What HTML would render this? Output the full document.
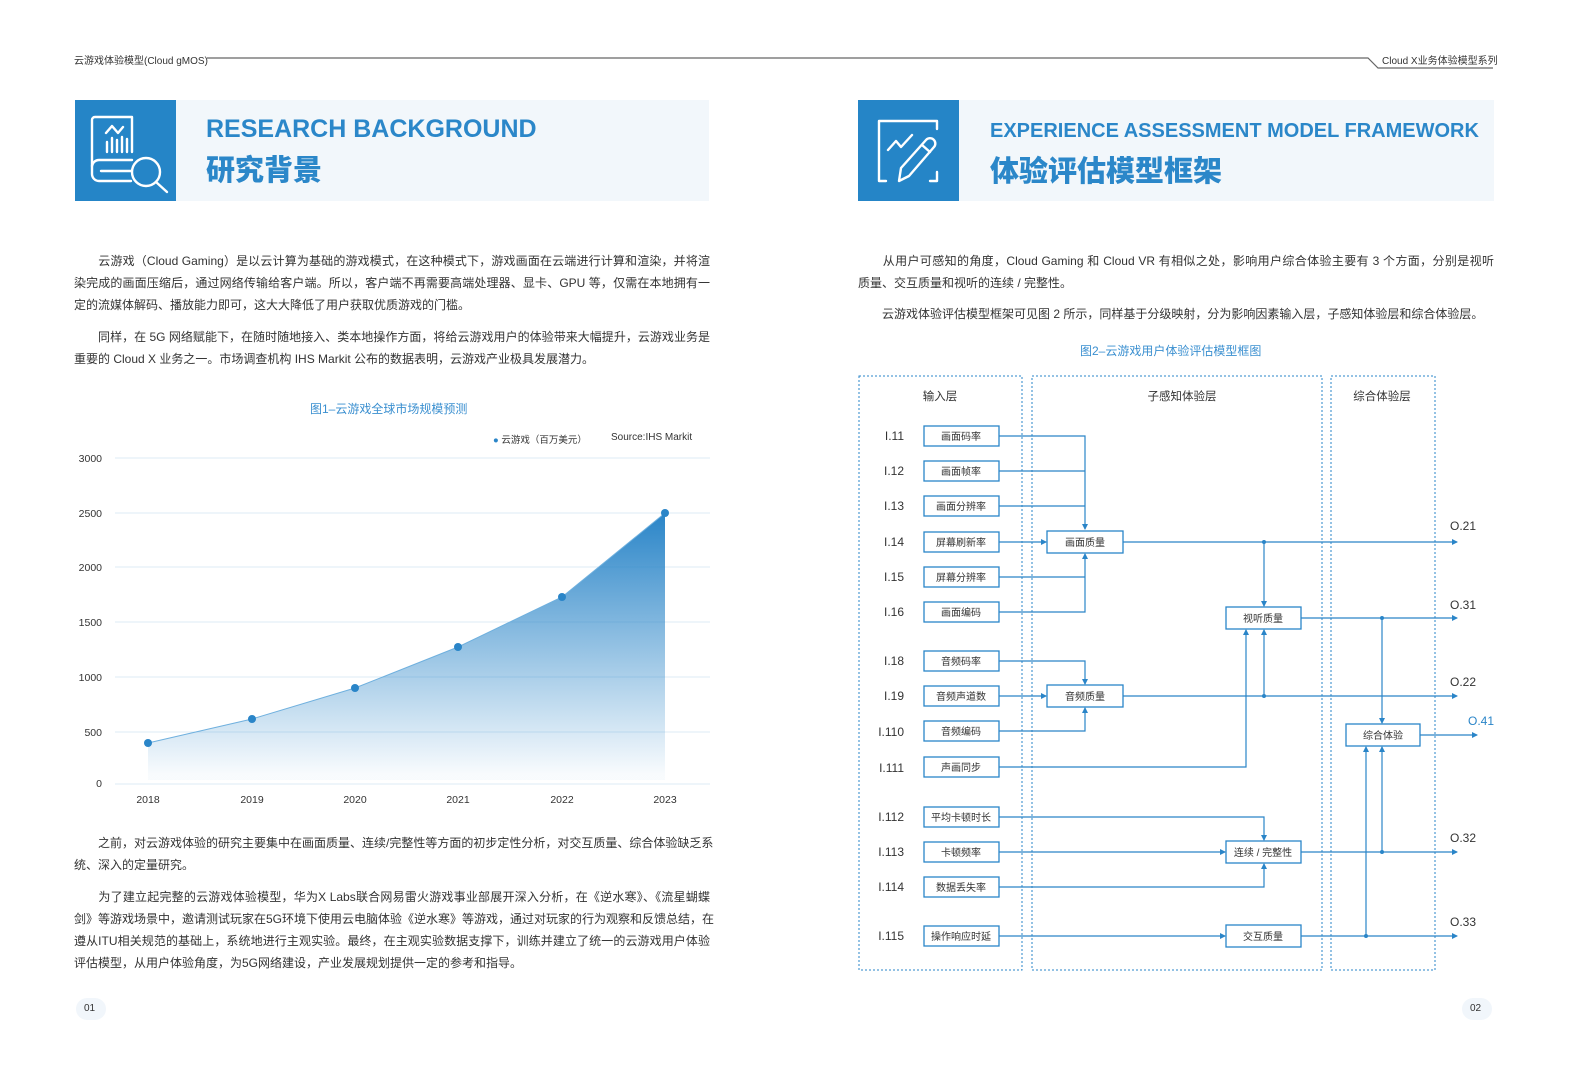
<!DOCTYPE html>
<html><head><meta charset="utf-8"><style>
*{margin:0;padding:0;box-sizing:border-box}
body{width:1587px;height:1077px;background:#fff;position:relative;overflow:hidden;font-family:"Liberation Sans","Noto Sans CJK SC",sans-serif;color:#333}
.a{position:absolute;white-space:nowrap}
.ln{position:absolute;font-size:12px;color:#333;white-space:nowrap;text-align:justify;text-align-last:justify;overflow:visible}
.ln.l{text-align-last:left}
.hd{position:absolute;background:#f2f7fb;height:101px}
.sq{position:absolute;background:#2585c7;width:101px;height:101px}
.en{position:absolute;color:#2b87c9;font-weight:bold;letter-spacing:0px;white-space:nowrap}
.zh{position:absolute;color:#2b87c9;font-weight:900;font-size:29px;white-space:nowrap}
</style></head><body>

<svg class="a" style="left:0;top:0" width="1587" height="80">
<polyline points="207,58 1368,58 1378,68 1493,68" fill="none" stroke="#666" stroke-width="1.2"/>
</svg>
<div class="a" style="left:74px;top:52px;font-size:10px;color:#333">云游戏体验模型(Cloud gMOS)</div>
<div class="a" style="left:1382px;top:52px;font-size:10px;color:#333">Cloud X业务体验模型系列</div>

<div class="hd" style="left:75px;top:100px;width:634px"></div>
<div class="sq" style="left:75px;top:100px"></div>
<svg class="a" style="left:75px;top:100px" width="101" height="101" fill="none" stroke="#fff" stroke-width="2.4" stroke-linecap="round" stroke-linejoin="round">
<path d="M57,52 V17 H20 a3,3 0 0 0 -3,3 V74 a7,7 0 0 0 7,7 H56"/>
<path d="M17,66 a7,7 0 0 1 7,-6 H57"/>
<path d="M26,71 H56"/>
<path d="M31,33 L37,26 L43,33 L48,27"/>
<path d="M32,42 V52 M37,38 V52 M42,40 V52 M47,37 V52 M52,39 V52"/>
<circle cx="71" cy="72" r="14"/>
<path d="M81,82 L92,92"/>
</svg>
<div class="en" style="left:206px;top:115px;font-size:25px">RESEARCH BACKGROUND</div>
<div class="zh" style="left:206px;top:147px">研究背景</div>

<div class="hd" style="left:858px;top:100px;width:636px"></div>
<div class="sq" style="left:858px;top:100px"></div>
<svg class="a" style="left:858px;top:100px" width="101" height="101" fill="none" stroke="#fff" stroke-width="2.4" stroke-linecap="round" stroke-linejoin="round">
<path d="M28,81 H21 V21 H79 V29"/>
<path d="M79,72 V81 H72"/>
<path d="M30,50 L38,41 L43,47 L54,35"/>
<path d="M41,81 L43,68 L68,40 a4,4 0 0 1 8,7 L51,76 Z"/>
<path d="M64,45 L72,52"/>
</svg>
<div class="en" style="left:990px;top:120px;font-size:20px">EXPERIENCE ASSESSMENT MODEL FRAMEWORK</div>
<div class="zh" style="left:990px;top:148px">体验评估模型框架</div>

<div class="ln" style="left:74px;top:252px;width:636px">　　云游戏（Cloud Gaming）是以云计算为基础的游戏模式，在这种模式下，游戏画面在云端进行计算和渲染，并将渲</div>
<div class="ln" style="left:74px;top:274px;width:636px">染完成的画面压缩后，通过网络传输给客户端。所以，客户端不再需要高端处理器、显卡、GPU 等，仅需在本地拥有一</div>
<div class="ln l" style="left:74px;top:296px;width:636px">定的流媒体解码、播放能力即可，这大大降低了用户获取优质游戏的门槛。</div>
<div class="ln" style="left:74px;top:328px;width:636px">　　同样，在 5G 网络赋能下，在随时随地接入、类本地操作方面，将给云游戏用户的体验带来大幅提升，云游戏业务是</div>
<div class="ln l" style="left:74px;top:350px;width:636px">重要的 Cloud X 业务之一。市场调查机构 IHS Markit 公布的数据表明，云游戏产业极具发展潜力。</div>

<div class="a" style="left:310px;top:400px;font-size:12px;color:#3a8fd0">图1–云游戏全球市场规模预测</div>
<div class="a" style="left:493px;top:432px;font-size:9.5px;color:#333"><span style="color:#2a85c8">●</span> 云游戏（百万美元）</div>
<div class="a" style="left:611px;top:432px;font-size:10px;color:#333">Source:IHS Markit</div>

<svg class="a" style="left:0;top:0" width="720" height="820">
<defs><linearGradient id="g" x1="0" y1="513" x2="0" y2="775" gradientUnits="userSpaceOnUse">
<stop offset="0" stop-color="#2a85c8"/><stop offset="1" stop-color="#2a85c8" stop-opacity="0.03"/></linearGradient></defs>
<g stroke="#dcebf6" stroke-width="1">
<line x1="115" y1="458" x2="710" y2="458"/><line x1="115" y1="513" x2="710" y2="513"/>
<line x1="115" y1="567" x2="710" y2="567"/><line x1="115" y1="622" x2="710" y2="622"/>
<line x1="115" y1="677" x2="710" y2="677"/><line x1="115" y1="732" x2="710" y2="732"/>
<line x1="115" y1="784" x2="710" y2="784"/></g>
<path d="M148,743 L252,719 L355,688 L458,647 L562,597 L665,513 L665,780 L148,780 Z" fill="url(#g)"/>
<polyline points="148,743 252,719 355,688 458,647 562,597 665,513" fill="none" stroke="#6fb0de" stroke-width="1"/>
<g fill="#2a85c8"><circle cx="148" cy="743" r="4"/><circle cx="252" cy="719" r="4"/><circle cx="355" cy="688" r="4"/><circle cx="458" cy="647" r="4"/><circle cx="562" cy="597" r="4"/><circle cx="665" cy="513" r="4"/></g>
<g font-size="10.5" fill="#333" text-anchor="end" font-family="Liberation Sans,sans-serif">
<text x="102" y="462">3000</text><text x="102" y="517">2500</text><text x="102" y="571">2000</text><text x="102" y="626">1500</text><text x="102" y="681">1000</text><text x="102" y="736">500</text><text x="102" y="787">0</text></g>
<g font-size="10.5" fill="#333" text-anchor="middle" font-family="Liberation Sans,sans-serif">
<text x="148" y="803">2018</text><text x="252" y="803">2019</text><text x="355" y="803">2020</text><text x="458" y="803">2021</text><text x="562" y="803">2022</text><text x="665" y="803">2023</text></g>
</svg>

<div class="ln" style="left:74px;top:834px;width:636px">　　之前，对云游戏体验的研究主要集中在画面质量、连续/完整性等方面的初步定性分析，对交互质量、综合体验缺乏系</div>
<div class="ln l" style="left:74px;top:856px;width:636px">统、深入的定量研究。</div>
<div class="ln" style="left:74px;top:888px;width:636px">　　为了建立起完整的云游戏体验模型，华为X Labs联合网易雷火游戏事业部展开深入分析，在《逆水寒》、《流星蝴蝶</div>
<div class="ln" style="left:74px;top:910px;width:636px">剑》等游戏场景中，邀请测试玩家在5G环境下使用云电脑体验《逆水寒》等游戏，通过对玩家的行为观察和反馈总结，在</div>
<div class="ln" style="left:74px;top:932px;width:636px">遵从ITU相关规范的基础上，系统地进行主观实验。最终，在主观实验数据支撑下，训练并建立了统一的云游戏用户体验</div>
<div class="ln l" style="left:74px;top:954px;width:636px">评估模型，从用户体验角度，为5G网络建设，产业发展规划提供一定的参考和指导。</div>

<div class="a" style="left:76px;top:998px;width:30px;height:22px;border-radius:11px;background:#f1f6fb"></div>
<div class="a" style="left:84px;top:1003px;font-size:10px;color:#333">01</div>
<div class="a" style="left:1462px;top:998px;width:30px;height:22px;border-radius:11px;background:#f1f6fb"></div>
<div class="a" style="left:1470px;top:1003px;font-size:10px;color:#333">02</div>

<div class="ln" style="left:858px;top:252px;width:636px">　　从用户可感知的角度，Cloud Gaming 和 Cloud VR 有相似之处，影响用户综合体验主要有 3 个方面，分别是视听</div>
<div class="ln l" style="left:858px;top:274px;width:636px">质量、交互质量和视听的连续 / 完整性。</div>
<div class="ln l" style="left:858px;top:305px;width:636px">　　云游戏体验评估模型框架可见图 2 所示，同样基于分级映射，分为影响因素输入层，子感知体验层和综合体验层。</div>
<div class="a" style="left:1080px;top:342px;font-size:12px;color:#3a8fd0">图2–云游戏用户体验评估模型框图</div>

<svg class="a" style="left:0;top:0" width="1587" height="1077" font-family="Liberation Sans,Noto Sans CJK SC,sans-serif">
<defs><marker id="ar" markerWidth="6" markerHeight="6" refX="5" refY="3" orient="auto" markerUnits="userSpaceOnUse"><path d="M0,0 L6,3 L0,6 Z" fill="#2a85c8"/></marker></defs>
<g fill="none" stroke="#2a85c8" stroke-width="1" stroke-dasharray="2,2">
<rect x="859" y="376" width="163" height="594"/>
<rect x="1032" y="376" width="290" height="594"/>
<rect x="1331" y="376" width="104" height="594"/>
</g>
<g font-size="11.5" fill="#333" text-anchor="middle">
<text x="940" y="400">输入层</text><text x="1182" y="400">子感知体验层</text><text x="1382" y="400">综合体验层</text></g>
<g fill="none" stroke="#2a85c8" stroke-width="1.2">
<path d="M999,436 H1085 V529" marker-end="url(#ar)"/>
<path d="M999,471 H1085"/><path d="M999,506 H1085"/>
<path d="M999,542 H1046" marker-end="url(#ar)"/>
<path d="M999,577 H1085"/>
<path d="M999,612 H1085 V554" marker-end="url(#ar)"/>
<path d="M999,661 H1085 V684" marker-end="url(#ar)"/>
<path d="M999,696 H1046" marker-end="url(#ar)"/>
<path d="M999,731 H1085 V708" marker-end="url(#ar)"/>
<path d="M999,767 H1246 V630" marker-end="url(#ar)"/>
<path d="M1123,542 H1457" marker-end="url(#ar)"/>
<path d="M1264,542 V606" marker-end="url(#ar)"/>
<path d="M1123,696 H1457" marker-end="url(#ar)"/>
<path d="M1264,696 V630" marker-end="url(#ar)"/>
<path d="M1301,618 H1457" marker-end="url(#ar)"/>
<path d="M1382,618 V723" marker-end="url(#ar)"/>
<path d="M1420,735 H1477" marker-end="url(#ar)"/>
<path d="M999,817 H1264 V840" marker-end="url(#ar)"/>
<path d="M999,852 H1225" marker-end="url(#ar)"/>
<path d="M999,887 H1264 V864" marker-end="url(#ar)"/>
<path d="M1301,852 H1457" marker-end="url(#ar)"/>
<path d="M1382,852 V747" marker-end="url(#ar)"/>
<path d="M999,936 H1225" marker-end="url(#ar)"/>
<path d="M1301,936 H1457" marker-end="url(#ar)"/>
<path d="M1366,936 V747" marker-end="url(#ar)"/>
</g>
<g fill="#2a85c8"><circle cx="1264" cy="542" r="2"/><circle cx="1264" cy="696" r="2"/><circle cx="1382" cy="618" r="2"/><circle cx="1382" cy="852" r="2"/><circle cx="1366" cy="936" r="2"/></g>
<g fill="#fff" stroke="#2a85c8" stroke-width="1.3">
<rect x="924" y="426" width="75" height="20"/><rect x="924" y="461" width="75" height="20"/><rect x="924" y="496" width="75" height="20"/><rect x="924" y="532" width="75" height="20"/><rect x="924" y="567" width="75" height="20"/><rect x="924" y="602" width="75" height="20"/>
<rect x="924" y="651" width="75" height="20"/><rect x="924" y="686" width="75" height="20"/><rect x="924" y="721" width="75" height="20"/><rect x="924" y="757" width="75" height="20"/>
<rect x="924" y="807" width="75" height="20"/><rect x="924" y="842" width="75" height="20"/><rect x="924" y="877" width="75" height="20"/><rect x="924" y="926" width="75" height="20"/>
<rect x="1047" y="531" width="76" height="22"/><rect x="1047" y="685" width="76" height="22"/>
<rect x="1226" y="607" width="75" height="22"/><rect x="1226" y="841" width="75" height="22"/><rect x="1226" y="925" width="75" height="22"/>
<rect x="1346" y="724" width="74" height="22"/>
</g>
<g font-size="10" fill="#333" text-anchor="middle">
<text x="961" y="440">画面码率</text><text x="961" y="475">画面帧率</text><text x="961" y="510">画面分辨率</text><text x="961" y="546">屏幕刷新率</text><text x="961" y="581">屏幕分辨率</text><text x="961" y="616">画面编码</text>
<text x="961" y="665">音频码率</text><text x="961" y="700">音频声道数</text><text x="961" y="735">音频编码</text><text x="961" y="771">声画同步</text>
<text x="961" y="821">平均卡顿时长</text><text x="961" y="856">卡顿频率</text><text x="961" y="891">数据丢失率</text><text x="961" y="940">操作响应时延</text>
<text x="1085" y="546">画面质量</text><text x="1085" y="700">音频质量</text><text x="1263" y="622">视听质量</text><text x="1263" y="856">连续 / 完整性</text><text x="1263" y="940">交互质量</text><text x="1383" y="739">综合体验</text>
</g>
<g font-size="12" fill="#333" text-anchor="end">
<text x="904" y="440">I.11</text><text x="904" y="475">I.12</text><text x="904" y="510">I.13</text><text x="904" y="546">I.14</text><text x="904" y="581">I.15</text><text x="904" y="616">I.16</text>
<text x="904" y="665">I.18</text><text x="904" y="700">I.19</text><text x="904" y="736">I.110</text><text x="904" y="772">I.111</text>
<text x="904" y="821">I.112</text><text x="904" y="856">I.113</text><text x="904" y="891">I.114</text><text x="904" y="940">I.115</text>
</g>
<g font-size="12" fill="#333">
<text x="1450" y="530">O.21</text><text x="1450" y="609">O.31</text><text x="1450" y="686">O.22</text><text x="1450" y="842">O.32</text><text x="1450" y="926">O.33</text>
<text x="1468" y="725" fill="#2a85c8">O.41</text></g>
</svg>
</body></html>
